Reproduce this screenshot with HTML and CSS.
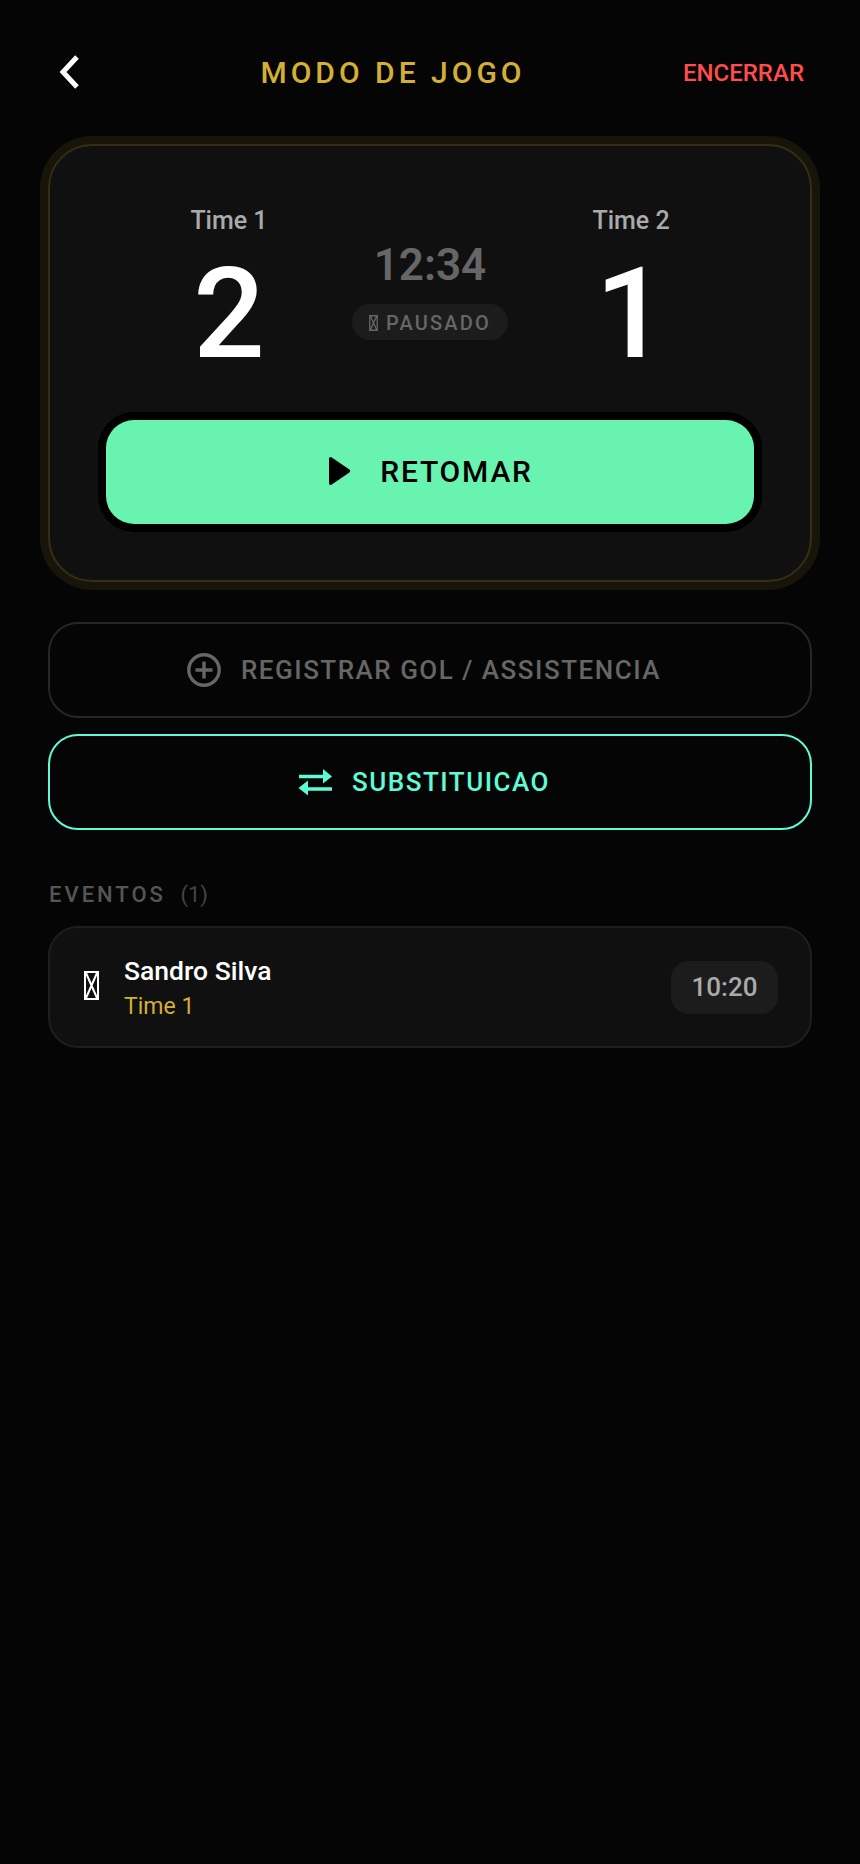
FILE: index.html
```html
<!DOCTYPE html>
<html lang="pt-BR">
<head>
  <meta charset="UTF-8" />
  <meta name="viewport" content="width=device-width, initial-scale=1.0"/>
  <title>Modo de jogo</title>
  <link rel="stylesheet" href="styles.css">
</head>
<body>
  <div class="page">
    <header class="top-bar">
      <button class="back-button" aria-label="Voltar">
        <svg width="24" height="36" viewBox="0 0 24 36"><path d="M20 3 L6 18 L20 33" fill="none" stroke="#fff" stroke-width="5"/></svg>
      </button>
      <h1 class="top-title">MODO DE JOGO</h1>
      <button class="end-button">ENCERRAR</button>
    </header>

    <section class="score-card">
      <div class="score-row">
        <div class="team">
          <span class="team-name">Time 1</span>
          <span class="team-score">2</span>
        </div>
        <div class="clock">
          <span class="clock-time">12:34</span>
          <span class="clock-status">
            <svg class="tofu" width="9" height="16" viewBox="0 0 9 16"><path d="M.75.75h7.500v14.500H.75zM1.500 1.500l6 13M7.500 1.500l-6 13" fill="none" stroke="#666" stroke-width="1.300"/></svg>
            PAUSADO
          </span>
        </div>
        <div class="team">
          <span class="team-name">Time 2</span>
          <span class="team-score">1</span>
        </div>
      </div>
      <button class="resume-button">
        <svg width="24" height="30" viewBox="0 0 24 30"><path d="M2 2.500v25a1.600 1.600 0 0 0 2.400 1.300l18-12.300a1.800 1.800 0 0 0 0-3L4.400 1.200A1.600 1.600 0 0 0 2 2.500z" fill="#000"/></svg>
        RETOMAR
      </button>
    </section>

    <div class="actions">
      <button class="action-button goal">
        <svg width="34" height="34" viewBox="0 0 34 34"><circle cx="17" cy="17" r="15.200" fill="none" stroke="#666" stroke-width="3.400"/><path d="M17 8.500v17M8.500 17h17" stroke="#666" stroke-width="3.400"/></svg>
        REGISTRAR GOL / ASSISTENCIA
      </button>
      <button class="action-button swap">
        <svg width="34" height="28" viewBox="0 0 34 28"><path d="M1 8.500h26M8 21h26" fill="none" stroke="#5ffbd6" stroke-width="3.400"/><path d="M25 1l9 7.500-9 7zM10 12.500v15l-9.500-7.500z" fill="#5ffbd6"/></svg>
        SUBSTITUICAO
      </button>
    </div>

    <h2 class="events-title">EVENTOS <span class="events-count">(1)</span></h2>

    <div class="event-card">
      <svg class="event-icon" width="15" height="29" viewBox="0 0 15 29"><path d="M1 1h13v27H1zM2 2l11 25M13 2L2 27" fill="none" stroke="#fff" stroke-width="2"/></svg>
      <div class="event-info">
        <span class="event-player">Sandro Silva</span>
        <span class="event-team">Time 1</span>
      </div>
      <span class="event-time">10:20</span>
    </div>
  </div>
</body>
</html>
```

FILE: styles.css
```css
*, *::before, *::after {
  box-sizing: border-box;
}

body {
  margin: 0;
  background-color: #050505;
  font-family: "Roboto", sans-serif;
  min-height: 1864px;
}

button {
  font-family: inherit;
  background: none;
  border: none;
  padding: 0;
}

.page {
  padding: 48px 48px 0 48px;
}

.top-bar {
  display: flex;
  align-items: center;
  justify-content: space-between;
  height: 48px;
  padding: 0 8px 0 9px;
}

.back-button {
  display: flex;
}

.top-title {
  margin: 0 0 0 22px;
  font-size: 30px;
  font-weight: 500;
  letter-spacing: 4px;
  color: #d4af37;
}

.end-button {
  margin-top: 2px;
  font-size: 24px;
  font-weight: 500;
  color: #ff4d4d;
}

.score-card {
  margin-top: 48px;
  border: 2px solid #352e16;
  border-radius: 44px;
  background-color: #101010;
  box-shadow: 0 0 0 8px #17140a;
  padding: 60px 48px 56px 48px;
}

.score-row {
  display: grid;
  grid-template-columns: 1fr auto 1fr;
  align-items: center;
  padding: 0 8px;
}

.team {
  display: flex;
  flex-direction: column;
  align-items: center;
}

.team-name {
  font-size: 25px;
  font-weight: 500;
  color: #aaa;
}

.team-score {
  margin-top: 16px;
  font-size: 126px;
  font-weight: 500;
  line-height: 126px;
  color: #fff;
}

.clock {
  display: flex;
  flex-direction: column;
  align-items: center;
  gap: 13px;
  padding-bottom: 5px;
}

.clock-time {
  font-size: 44px;
  font-weight: 600;
  color: #666;
}

.clock-status {
  display: flex;
  align-items: center;
  gap: 8px;
  height: 36px;
  padding: 2px 17px 0 17px;
  border-radius: 18px;
  background-color: #1c1c1c;
  font-size: 20px;
  font-weight: 500;
  letter-spacing: 2.200px;
  color: #666;
}

.resume-button {
  display: flex;
  align-items: center;
  justify-content: center;
  gap: 29px;
  width: 648px;
  height: 104px;
  margin: 43px 8px 0 8px;
  padding-bottom: 2px;
  border-radius: 28px;
  background-color: #69f3b1;
  box-shadow: 0 0 0 8px #000;
  font-size: 30px;
  font-weight: 500;
  letter-spacing: 1.800px;
  color: #000;
}

.actions {
  display: flex;
  flex-direction: column;
  gap: 16px;
  margin-top: 40px;
}

.action-button {
  display: flex;
  align-items: center;
  justify-content: center;
  gap: 20px;
  height: 96px;
  padding-right: 12px;
  border-radius: 30px;
  font-size: 26px;
  font-weight: 500;
  letter-spacing: 1.500px;
}

.goal {
  border: 2px solid #262626;
  color: #666;
}

.swap {
  border: 2px solid #5ffbd6;
  color: #5ffbd6;
}

.events-title {
  margin: 52px 0 0 1px;
  font-size: 22px;
  font-weight: 500;
  letter-spacing: 3px;
  color: #555;
}

.events-count {
  margin-left: 6px;
  font-weight: 400;
  letter-spacing: 0;
  color: #444;
}

.event-card {
  display: flex;
  align-items: center;
  height: 122px;
  margin-top: 19px;
  padding: 0 32px 0 34px;
  border: 2px solid #1e1e1e;
  border-radius: 30px;
  background-color: #101010;
}

.event-icon {
  margin-bottom: 3px;
}

.event-info {
  display: flex;
  flex-direction: column;
  gap: 7px;
  margin-left: 25px;
  flex-grow: 1;
}

.event-player {
  font-size: 26.500px;
  font-weight: 500;
  color: #fff;
}

.event-team {
  font-size: 23px;
  color: #d4af37;
}

.event-time {
  display: flex;
  align-items: center;
  justify-content: center;
  width: 107px;
  height: 53px;
  border-radius: 18px;
  background-color: #1c1c1c;
  font-size: 26px;
  font-weight: 500;
  color: #aaa;
}
```
